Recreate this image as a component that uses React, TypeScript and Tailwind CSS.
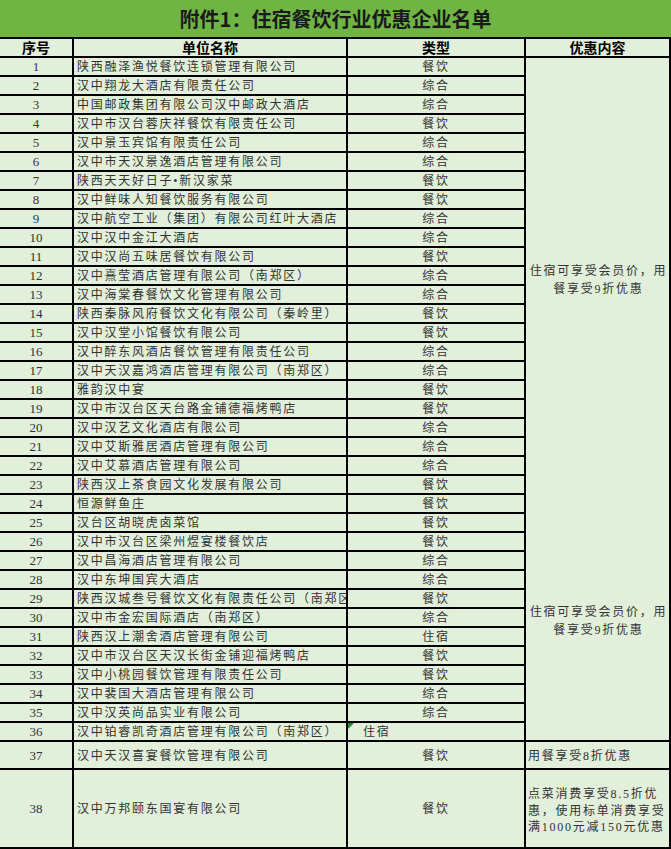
import React from 'react';

type Row = [string, string];

// 序号 1-36 的单位名称 / 类型
const rows: Row[] = [
  ['陕西融泽渔悦餐饮连锁管理有限公司', '餐饮'],
  ['汉中翔龙大酒店有限责任公司', '综合'],
  ['中国邮政集团有限公司汉中邮政大酒店', '综合'],
  ['汉中市汉台蓉庆祥餐饮有限责任公司', '餐饮'],
  ['汉中景玉宾馆有限责任公司', '综合'],
  ['汉中市天汉景逸酒店管理有限公司', '综合'],
  ['陕西天天好日子•新汉家菜', '餐饮'],
  ['汉中鲜味人知餐饮服务有限公司', '餐饮'],
  ['汉中航空工业（集团）有限公司红叶大酒店', '综合'],
  ['汉中汉中金江大酒店', '综合'],
  ['汉中汉尚五味居餐饮有限公司', '餐饮'],
  ['汉中熹莹酒店管理有限公司（南郑区）', '综合'],
  ['汉中海棠春餐饮文化管理有限公司', '综合'],
  ['陕西秦脉风府餐饮文化有限公司（秦岭里）', '餐饮'],
  ['汉中汉堂小馆餐饮有限公司', '餐饮'],
  ['汉中醉东风酒店餐饮管理有限责任公司', '综合'],
  ['汉中天汉嘉鸿酒店管理有限公司（南郑区）', '综合'],
  ['雅韵汉中宴', '餐饮'],
  ['汉中市汉台区天台路金铺德福烤鸭店', '餐饮'],
  ['汉中汉艺文化酒店有限公司', '综合'],
  ['汉中艾斯雅居酒店管理有限公司', '综合'],
  ['汉中艾慕酒店管理有限公司', '综合'],
  ['陕西汉上茶食园文化发展有限公司', '餐饮'],
  ['恒源鲜鱼庄', '餐饮'],
  ['汉台区胡晓虎卤菜馆', '餐饮'],
  ['汉中市汉台区梁州煜宴楼餐饮店', '餐饮'],
  ['汉中昌海酒店管理有限公司', '综合'],
  ['汉中东坤国宾大酒店', '综合'],
  ['陕西汉城叁号餐饮文化有限责任公司（南郑区）', '餐饮'],
  ['汉中市金宏国际酒店（南郑区）', '综合'],
  ['陕西汉上潮舍酒店管理有限公司', '住宿'],
  ['汉中市汉台区天汉长街金铺迎福烤鸭店', '餐饮'],
  ['汉中小桃园餐饮管理有限责任公司', '餐饮'],
  ['汉中裴国大酒店管理有限公司', '综合'],
  ['汉中汉英尚品实业有限公司', '综合'],
  ['汉中铂睿凯奇酒店管理有限公司（南郑区）', '住宿'],
];

const cell = 'bg-[#e2efda] flex items-center';
const numCell = `${cell} justify-center text-[13px] pt-[1px]`;
const nameCell = `${cell} pl-[3px] pt-[1px] overflow-hidden whitespace-nowrap tracking-[1.75px]`;
const typeCell = `${cell} justify-center pt-[1px] tracking-[1.75px]`;

const Discount = () => (
  <div className="text-center leading-[18px] tracking-[1.75px] pl-[2px]">
    <div className="whitespace-nowrap">住宿可享受会员价，用</div>
    <div className="whitespace-nowrap">餐享受9折优惠</div>
  </div>
);

export default function App() {
  return (
    <div className="w-[671px] h-[849px] bg-[#e2efda] text-[12px] text-[#333] font-['Liberation_Serif','Noto_Sans_CJK_SC',serif]">
      <div className="h-[37px] bg-[#70b544] flex items-center justify-center pt-[1px]">
        <span className="text-[20px] font-bold text-[#1a1a1a] font-['Noto_Sans_CJK_SC',sans-serif]">
          附件1：住宿餐饮行业优惠企业名单
        </span>
      </div>

      <div className="grid grid-cols-[72px_272px_176px_143px] gap-[2px] bg-black pt-[2px] pb-[2px] pr-[2px]">
        {/* 表头 */}
        {['序号', '单位名称', '类型', '优惠内容'].map((h) => (
          <div
            key={h}
            className="h-[17px] bg-[#e2efda] flex items-center justify-center text-[14px] font-bold text-black font-['Noto_Sans_CJK_SC',sans-serif]"
          >
            {h}
          </div>
        ))}

        {rows.map(([name, type], i) => {
          const last = i === rows.length - 1;
          return (
            <React.Fragment key={i}>
              <div className={`h-[17px] ${numCell}`}>{i + 1}</div>
              <div className={`h-[17px] ${nameCell}`}>{name}</div>
              {last ? (
                <div className={`h-[17px] relative ${cell} pl-[15px] pt-[1px] tracking-[1.75px]`}>
                  <div className="absolute top-0 left-0 w-0 h-0 border-t-[6px] border-t-[#1e8a2e] border-r-[6px] border-r-transparent" />
                  {type}
                </div>
              ) : (
                <div className={`h-[17px] ${typeCell}`}>{type}</div>
              )}
              {i === 0 && (
                <div className="row-span-36 bg-[#e2efda] flex flex-col">
                  <div className="h-[439px] flex items-center justify-center pt-[4px]">
                    <Discount />
                  </div>
                  <div className="h-[243px] flex items-center justify-center pt-[4px]">
                    <Discount />
                  </div>
                </div>
              )}
            </React.Fragment>
          );
        })}

        {/* 37 */}
        <div className={`h-[26px] ${numCell}`}>37</div>
        <div className={`h-[26px] ${nameCell}`}>汉中天汉喜宴餐饮管理有限公司</div>
        <div className={`h-[26px] ${typeCell}`}>餐饮</div>
        <div className={`h-[26px] ${cell} pl-[2px] pt-[1px] tracking-[1.75px]`}>用餐享受8折优惠</div>

        {/* 38 */}
        <div className={`h-[77px] ${numCell}`}>38</div>
        <div className={`h-[77px] ${nameCell}`}>汉中万邦颐东国宴有限公司</div>
        <div className={`h-[77px] ${typeCell}`}>餐饮</div>
        <div className={`h-[77px] ${cell} pl-[2px] pt-[5px]`}>
          <div className="leading-[16.7px] tracking-[1.75px]">
            <div className="whitespace-nowrap">点菜消费享受8.5折优</div>
            <div className="whitespace-nowrap">惠，使用标单消费享受</div>
            <div className="whitespace-nowrap">满1000元减150元优惠</div>
          </div>
        </div>
      </div>
    </div>
  );
}
